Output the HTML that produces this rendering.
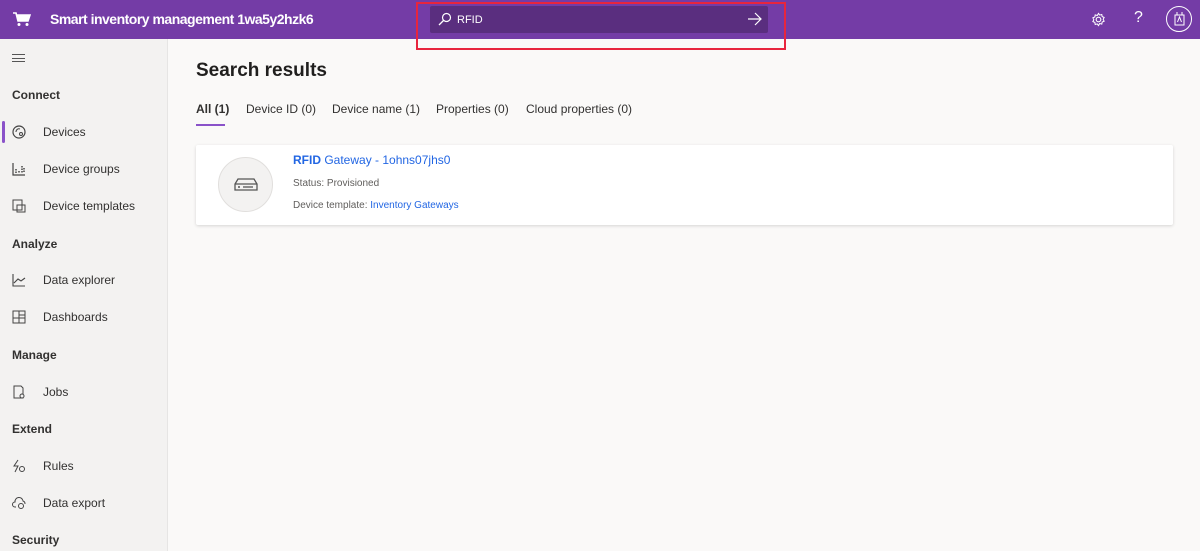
<!DOCTYPE html>
<html><head><meta charset="utf-8"><style>
*{margin:0;padding:0;box-sizing:border-box}
body{width:1200px;height:551px;overflow:hidden;font-family:"Segoe UI","Liberation Sans",sans-serif;background:#faf9f8;position:relative;color:#323130}
.hdr{position:absolute;left:0;top:0;width:1200px;height:39px;background:#743ca6;color:#fff}
.title{position:absolute;left:50px;top:11px;font-size:14px;font-weight:bold;letter-spacing:-0.5px}
.search{position:absolute;left:430px;top:6px;width:338px;height:27px;background:#5a2e7f;border-radius:2px}
.search span{position:absolute;left:27px;top:8px;font-size:11px;color:#fff}
.red{position:absolute;left:416px;top:2px;width:370px;height:48px;border:2px solid #e8253d}
.side{position:absolute;left:0;top:39px;width:168px;height:512px;background:#f3f2f1;border-right:1px solid #e6e5e4}
.sec{position:absolute;left:12px;font-size:12px;font-weight:bold;color:#323130}
.item{position:absolute;left:43px;font-size:12px;color:#323130}
.ic{position:absolute;left:12px}
.tab{position:absolute;top:102px;font-size:12px;color:#323130}
.card{position:absolute;left:196px;top:145px;width:977px;height:80px;background:#fff;border-radius:2px;box-shadow:0 1px 3px rgba(0,0,0,.15)}
a{color:#2266e3;text-decoration:none}
</style></head><body>
<div class="hdr">
<svg style="position:absolute;left:13px;top:12px" width="18" height="15" viewBox="0 0 18 15"><path d="M0 1h3l2 8h10l2-6H4" fill="none" stroke="#fff" stroke-width="1.6"/><path d="M4 3h13l-2 6H5z" fill="#fff"/><circle cx="6" cy="12.5" r="1.5" fill="#fff"/><circle cx="14" cy="12.5" r="1.5" fill="#fff"/></svg>
<div class="title">Smart inventory management 1wa5y2hzk6</div>
<div class="search"><svg style="position:absolute;left:8px;top:6px" width="14" height="14" viewBox="0 0 14 14"><circle cx="8.5" cy="5.5" r="4" fill="none" stroke="#fff" stroke-width="1.2"/><path d="M5.5 8.5L1 13" stroke="#fff" stroke-width="1.3"/></svg><span>RFID</span>
<svg style="position:absolute;left:317px;top:6px" width="15" height="14" viewBox="0 0 15 14"><path d="M1 7h13M8 1l6 6-6 6" fill="none" stroke="#fff" stroke-width="1.2"/></svg></div>
<svg style="position:absolute;left:1091px;top:12px" width="15" height="15" viewBox="0 0 16 16"><circle cx="8" cy="8" r="2.5" fill="none" stroke="#fff" stroke-width="1.2"/><path d="M8 1.5l1.3 1.8 2.2-.6.4 2.2 2.1.9-1 2 1 2-2.1.9-.4 2.2-2.2-.6L8 14.5l-1.3-1.8-2.2.6-.4-2.2-2.1-.9 1-2-1-2 2.1-.9.4-2.2 2.2.6z" fill="none" stroke="#fff" stroke-width="1.1"/></svg>
<div style="position:absolute;left:1134px;top:9px;font-size:16px;color:#fff">?</div>
<div style="position:absolute;left:1166px;top:6px;width:26px;height:26px;border:1px solid #fff;border-radius:50%"><svg style="position:absolute;left:7px;top:5px" width="11" height="14" viewBox="0 0 11 14"><rect x="1" y="3" width="9" height="10" fill="none" stroke="#fff"/><path d="M3 0v3M8 0v3M3.5 10l2-5 2 5" fill="none" stroke="#fff"/></svg></div>
</div>
<div class="red"></div>
<div class="side">
<div style="position:absolute;left:12px;top:15px;width:13px;height:8px;border-top:1px solid #555;border-bottom:1px solid #555"><div style="margin-top:3px;border-top:1px solid #555"></div></div>
<div class="sec" style="top:49px">Connect</div>
<div style="position:absolute;left:2px;top:82px;width:3px;height:22px;background:#8a52c9;border-radius:2px"></div>
<svg class="ic" style="top:86px" width="14" height="14"><circle cx="7" cy="7" r="6" fill="none" stroke="#444" stroke-width="1.2"/><circle cx="9" cy="9" r="1.5" fill="none" stroke="#444"/><path d="M4 7a3 3 0 0 1 4-3" fill="none" stroke="#444"/></svg>
<div class="item" style="top:86px">Devices</div>
<svg class="ic" style="top:123px" width="14" height="14"><path d="M1 1v12h12" fill="none" stroke="#444" stroke-width="1.2"/><path d="M4 7v4M7 9v2M10 4v7M12 6v5" stroke="#444" stroke-width="1.5" stroke-dasharray="1.5 1"/></svg>
<div class="item" style="top:123px">Device groups</div>
<svg class="ic" style="top:160px" width="14" height="14"><rect x="1" y="1" width="9" height="10" fill="none" stroke="#444"/><rect x="5" y="6" width="8" height="7" fill="none" stroke="#444"/></svg>
<div class="item" style="top:160px">Device templates</div>
<div class="sec" style="top:198px">Analyze</div>
<svg class="ic" style="top:234px" width="14" height="14"><path d="M1 1v12h12M2 10l4-4 3 2 4-3" fill="none" stroke="#444" stroke-width="1.1"/></svg>
<div class="item" style="top:234px">Data explorer</div>
<svg class="ic" style="top:271px" width="14" height="14"><rect x="1" y="1" width="12" height="12" fill="none" stroke="#444"/><path d="M7 1v12M1 8h12M7 5h6" stroke="#444"/></svg>
<div class="item" style="top:271px">Dashboards</div>
<div class="sec" style="top:309px">Manage</div>
<svg class="ic" style="top:346px" width="14" height="14"><path d="M2 1h7l2 2v10H2z" fill="none" stroke="#444"/><circle cx="10" cy="11" r="2" fill="#f3f2f1" stroke="#444"/></svg>
<div class="item" style="top:346px">Jobs</div>
<div class="sec" style="top:383px">Extend</div>
<svg class="ic" style="top:420px" width="14" height="14"><path d="M6 1L2 7h4l-3 6" fill="none" stroke="#444"/><circle cx="10" cy="10" r="2.5" fill="none" stroke="#444"/></svg>
<div class="item" style="top:420px">Rules</div>
<svg class="ic" style="top:457px" width="14" height="14"><path d="M4 11H3a2.5 2.5 0 0 1 0-5 4 4 0 0 1 8-1 3 3 0 0 1 2 3" fill="none" stroke="#444"/><circle cx="9" cy="10" r="2.5" fill="none" stroke="#444"/></svg>
<div class="item" style="top:457px">Data export</div>
<div class="sec" style="top:494px">Security</div>
</div>
<div style="position:absolute;left:196px;top:60px;font-size:19px;font-weight:600;color:#201f1e">Search results</div>
<div class="tab" style="left:196px;font-weight:600">All (1)</div>
<div style="position:absolute;left:196px;top:124px;width:29px;height:2px;background:#8a52c9"></div>
<div class="tab" style="left:246px">Device ID (0)</div>
<div class="tab" style="left:332px">Device name (1)</div>
<div class="tab" style="left:436px">Properties (0)</div>
<div class="tab" style="left:526px">Cloud properties (0)</div>
<div class="card">
<div style="position:absolute;left:22px;top:12px;width:55px;height:55px;border-radius:50%;background:#f3f2f1;border:1px solid #e1dfdd"></div>
<svg style="position:absolute;left:38px;top:33px" width="24" height="13" viewBox="0 0 24 13"><path d="M4 1h16l3 5v6H1V6z M1 6h22" fill="none" stroke="#555" stroke-width="1.3"/><circle cx="5" cy="9" r="1" fill="#555"/><path d="M9 9h10" stroke="#555" stroke-width="1.3"/></svg>
<div style="position:absolute;left:97px;top:8px;font-size:12px"><a><b>RFID</b> Gateway - 1ohns07jhs0</a></div>
<div style="position:absolute;left:97px;top:33px;font-size:10px;color:#605e5c">Status: Provisioned</div>
<div style="position:absolute;left:97px;top:55px;font-size:10px;color:#605e5c">Device template: <a>Inventory Gateways</a></div>
</div>
</body></html>
